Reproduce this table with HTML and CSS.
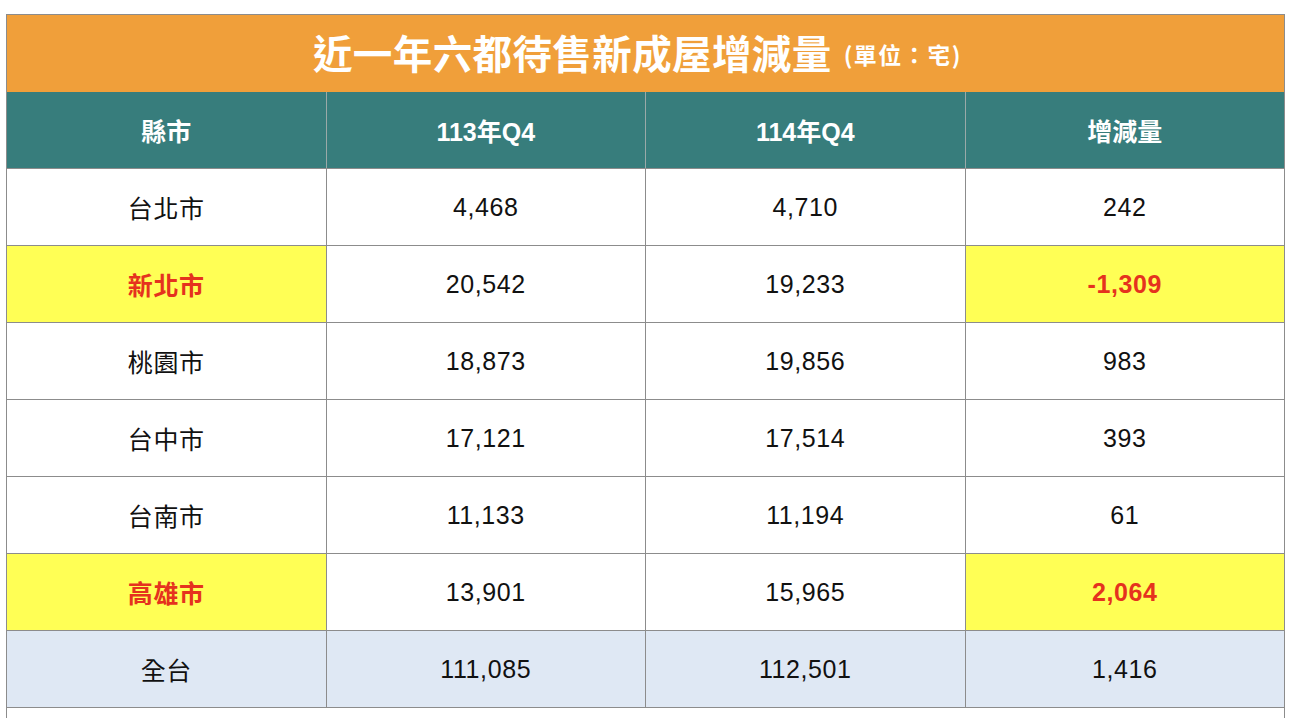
FILE: index.html
```html
<!DOCTYPE html>
<html lang="zh-Hant">
<head>
<meta charset="utf-8">
<link rel="stylesheet" href="styles.css">
</head>
<body>
<table class="grid">
  <thead>
    <tr class="title-row">
      <th colspan="4" class="title"><span class="title-main">近一年六都待售新成屋增減量</span><span class="title-unit">(單位：宅)</span></th>
    </tr>
    <tr class="head-row">
      <th>縣市</th>
      <th>113年Q4</th>
      <th>114年Q4</th>
      <th>增減量</th>
    </tr>
  </thead>
  <tbody>
    <tr><td>台北市</td><td>4,468</td><td>4,710</td><td>242</td></tr>
    <tr><td class="hl">新北市</td><td>20,542</td><td>19,233</td><td class="hl">-1,309</td></tr>
    <tr><td>桃園市</td><td>18,873</td><td>19,856</td><td>983</td></tr>
    <tr><td>台中市</td><td>17,121</td><td>17,514</td><td>393</td></tr>
    <tr><td>台南市</td><td>11,133</td><td>11,194</td><td>61</td></tr>
    <tr><td class="hl">高雄市</td><td>13,901</td><td>15,965</td><td class="hl">2,064</td></tr>
    <tr class="total"><td>全台</td><td>111,085</td><td>112,501</td><td>1,416</td></tr>
    <tr class="blank"><td colspan="4"></td></tr>
  </tbody>
</table>
</body>
</html>
```
FILE: styles.css
```css
html, body {
  margin: 0;
  padding: 0;
  background: #ffffff;
}
body {
  padding: 14px 0 0 6px;
  font-family: "Liberation Sans", "Noto Sans CJK TC", sans-serif;
}
.grid {
  border-collapse: collapse;
  width: 1279px;
  table-layout: fixed;
}
.grid th, .grid td {
  border: 1px solid #8c8c8c;
  text-align: center;
  vertical-align: middle;
  padding: 0;
  height: 76px;
}
.grid th.title {
  background: #f09f3a;
  color: #ffffff;
  height: 73px;
  border-bottom: none;
  padding: 0 16px 4px 0;
}
.title-main {
  font-family: "Noto Sans CJK TC", sans-serif;
  font-weight: 700;
  font-size: 39.5px;
  letter-spacing: 0.4px;
  vertical-align: middle;
}
.title-unit {
  font-family: "Noto Sans CJK TC", sans-serif;
  font-weight: 700;
  font-size: 23px;
  letter-spacing: 1.5px;
  margin-left: 12px;
  vertical-align: middle;
  position: relative;
  top: 2px;
}
.head-row th {
  background: #377d7c;
  color: #ffffff;
  font-weight: 700;
  font-size: 25px;
  border-top: none;
  border-left-color: #9aa9a8;
  border-right-color: #9aa9a8;
}
.head-row th:first-child { border-left-color: #8c8c8c; }
.head-row th:last-child { border-right-color: #8c8c8c; }
.grid td {
  font-size: 25px;
  color: #111111;
  letter-spacing: 0.6px;
  background: #ffffff;
}
.grid td.hl {
  background: #ffff55;
  color: #e5321e;
  font-weight: 700;
}
.total td {
  background: #dfe8f4;
}
.blank td {
  height: 76px;
}
```
